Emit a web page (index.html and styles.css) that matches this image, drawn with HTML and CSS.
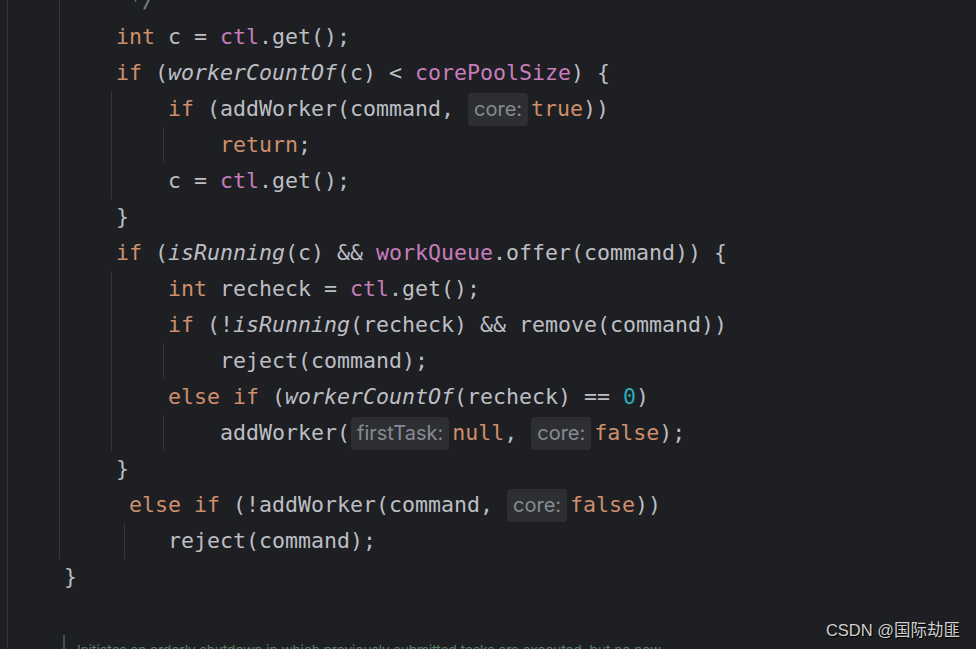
FILE: index.html
```html
<!DOCTYPE html>
<html>
<head>
<meta charset="utf-8">
<link rel="stylesheet" href="styles.css">
</head>
<body>
<div class="editor">
  <div class="block cls">
    <div class="block">
      <div class="ln"><span class="cm"> */</span></div>
      <div class="ln"><span class="kw">int</span> c = <span class="fd">ctl</span>.get();</div>
      <div class="ln"><span class="kw">if</span> (<span class="it">workerCountOf</span>(c) &lt; <span class="fd">corePoolSize</span>) {</div>
      <div class="block">
        <div class="ln"><span class="kw">if</span> (addWorker(command, <span class="hint">core:</span><span class="kw">true</span>))</div>
        <div class="block">
          <div class="ln"><span class="kw">return</span>;</div>
        </div>
        <div class="ln">c = <span class="fd">ctl</span>.get();</div>
      </div>
      <div class="ln">}</div>
      <div class="ln"><span class="kw">if</span> (<span class="it">isRunning</span>(c) &amp;&amp; <span class="fd">workQueue</span>.offer(command)) {</div>
      <div class="block">
        <div class="ln"><span class="kw">int</span> recheck = <span class="fd">ctl</span>.get();</div>
        <div class="ln"><span class="kw">if</span> (!<span class="it">isRunning</span>(recheck) &amp;&amp; remove(command))</div>
        <div class="block">
          <div class="ln">reject(command);</div>
        </div>
        <div class="ln"><span class="kw">else if</span> (<span class="it">workerCountOf</span>(recheck) == <span class="num">0</span>)</div>
        <div class="block">
          <div class="ln">addWorker(<span class="hint">firstTask:</span><span class="kw">null</span>, <span class="hint">core:</span><span class="kw">false</span>);</div>
        </div>
      </div>
      <div class="ln">}</div>
      <div class="ln"> <span class="kw">else if</span> (!addWorker(command, <span class="hint">core:</span><span class="kw">false</span>))</div>
      <div class="block shifted">
        <div class="ln">reject(command);</div>
      </div>
    </div>
    <div class="ln">}</div>
    <div class="ln"></div>
    <div class="doc"><p class="doc-text">Initiates an orderly shutdown in which previously submitted tasks are executed, but no new tasks will be accepted.</p></div>
  </div>
</div>
<div class="watermark">CSDN @国际劫匪</div>
</body>
</html>
```

FILE: styles.css
```css
html, body {
  margin: 0;
  padding: 0;
  background: #1e1f22;
  height: 100%;
  overflow: hidden;
}

.editor {
  margin-top: -17px;
  padding-left: 7px;
  font-family: "DejaVu Sans Mono", "Liberation Mono", monospace;
  font-size: 21.6px;
  color: #bcbec4;
  height: 700px;
}

.block {
  border-left: 1px solid #34363a;
  padding-left: 56px;
  margin-left: -5px;
}

.cls {
  margin-left: 0;
  height: 100%;
}

.block.shifted {
  margin-left: 8px;
  padding-left: 43px;
}

.ln {
  height: 36px;
  line-height: 36px;
  white-space: pre;
}

.kw { color: #cf8e6d; }
.fd { color: #c77dbb; }
.num { color: #2aacb8; }
.cm { color: #7a7e85; }
.it { font-style: italic; }

.hint {
  display: inline-block;
  font-family: Inter, "Noto Sans", sans-serif;
  font-size: 20px;
  line-height: 33px;
  height: 33px;
  padding: 0 6px;
  margin: 2px 3px 0 1px;
  border-radius: 4px;
  background: #2d2f33;
  color: #878b91;
  vertical-align: top;
}

.doc {
  margin-top: 4px;
  margin-left: -1px;
  border-left: 2px solid #3f5245;
  padding-left: 12px;
  padding-top: 5px;
}

.doc-text {
  margin: 0;
  width: 600px;
  font-family: Inter, "Noto Sans", sans-serif;
  font-size: 13.6px;
  line-height: 20px;
  color: #5f826b;
}

.watermark {
  position: absolute;
  right: 16px;
  bottom: 8px;
  font-family: "Liberation Sans", "Noto Sans CJK SC", sans-serif;
  font-size: 16.5px;
  color: #d0d0d0;
  text-shadow: 1px 1px 1px #000;
}
```
